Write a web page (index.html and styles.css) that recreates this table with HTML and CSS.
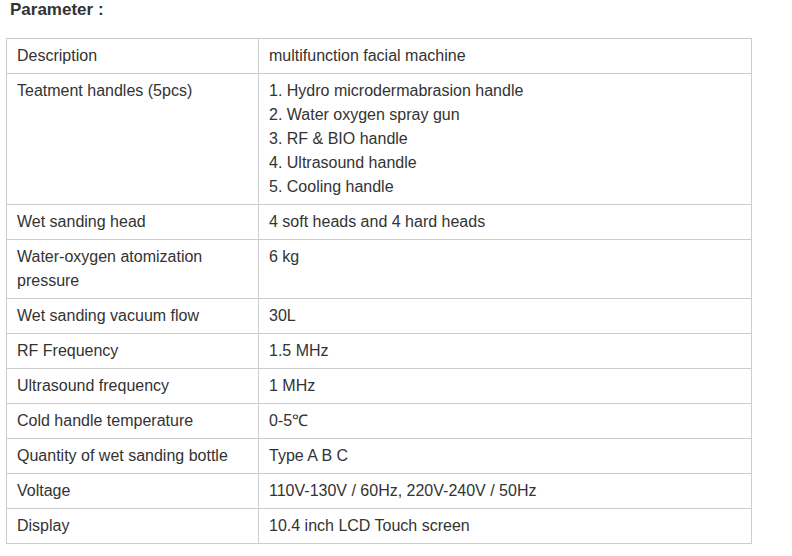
FILE: index.html
```html
<!DOCTYPE html>
<html>
<head>
<meta charset="utf-8">
<link rel="stylesheet" href="styles.css">
</head>
<body>
<div class="page">
  <h3 class="title">Parameter :</h3>
  <table class="params">
    <tr><td class="k">Description</td><td>multifunction facial machine</td></tr>
    <tr><td class="k">Teatment handles (5pcs)</td><td>1. Hydro microdermabrasion handle<br>2. Water oxygen spray gun<br>3. RF &amp; BIO handle<br>4. Ultrasound handle<br>5. Cooling handle</td></tr>
    <tr><td class="k">Wet sanding head</td><td>4 soft heads and 4 hard heads</td></tr>
    <tr><td class="k">Water-oxygen atomization pressure</td><td>6 kg</td></tr>
    <tr><td class="k">Wet sanding vacuum flow</td><td>30L</td></tr>
    <tr><td class="k">RF Frequency</td><td>1.5 MHz</td></tr>
    <tr><td class="k">Ultrasound frequency</td><td>1 MHz</td></tr>
    <tr><td class="k">Cold handle temperature</td><td>0-5℃</td></tr>
    <tr><td class="k">Quantity of wet sanding bottle</td><td>Type A B C</td></tr>
    <tr><td class="k">Voltage</td><td>110V-130V / 60Hz, 220V-240V / 50Hz</td></tr>
    <tr><td class="k">Display</td><td>10.4 inch LCD Touch screen</td></tr>
  </table>
</div>
</body>
</html>
```
FILE: styles.css
```css
html, body {
  margin: 0;
  padding: 0;
  background: #fff;
}
.page {
  padding: 0 0 0 6px;
  font-family: "Liberation Sans", Arial, sans-serif;
  color: #333;
}
.title {
  margin: 0 0 18px 4px;
  font-size: 17px;
  font-weight: bold;
  line-height: 20px;
  color: #333;
}
.params {
  border-collapse: collapse;
  width: 746px;
  font-size: 16px;
  line-height: 24px;
}
.params td {
  border: 1px solid #ccc;
  padding: 5px 10px;
  vertical-align: top;
  text-align: left;
}
.params td.k {
  width: 231px;
}
```
